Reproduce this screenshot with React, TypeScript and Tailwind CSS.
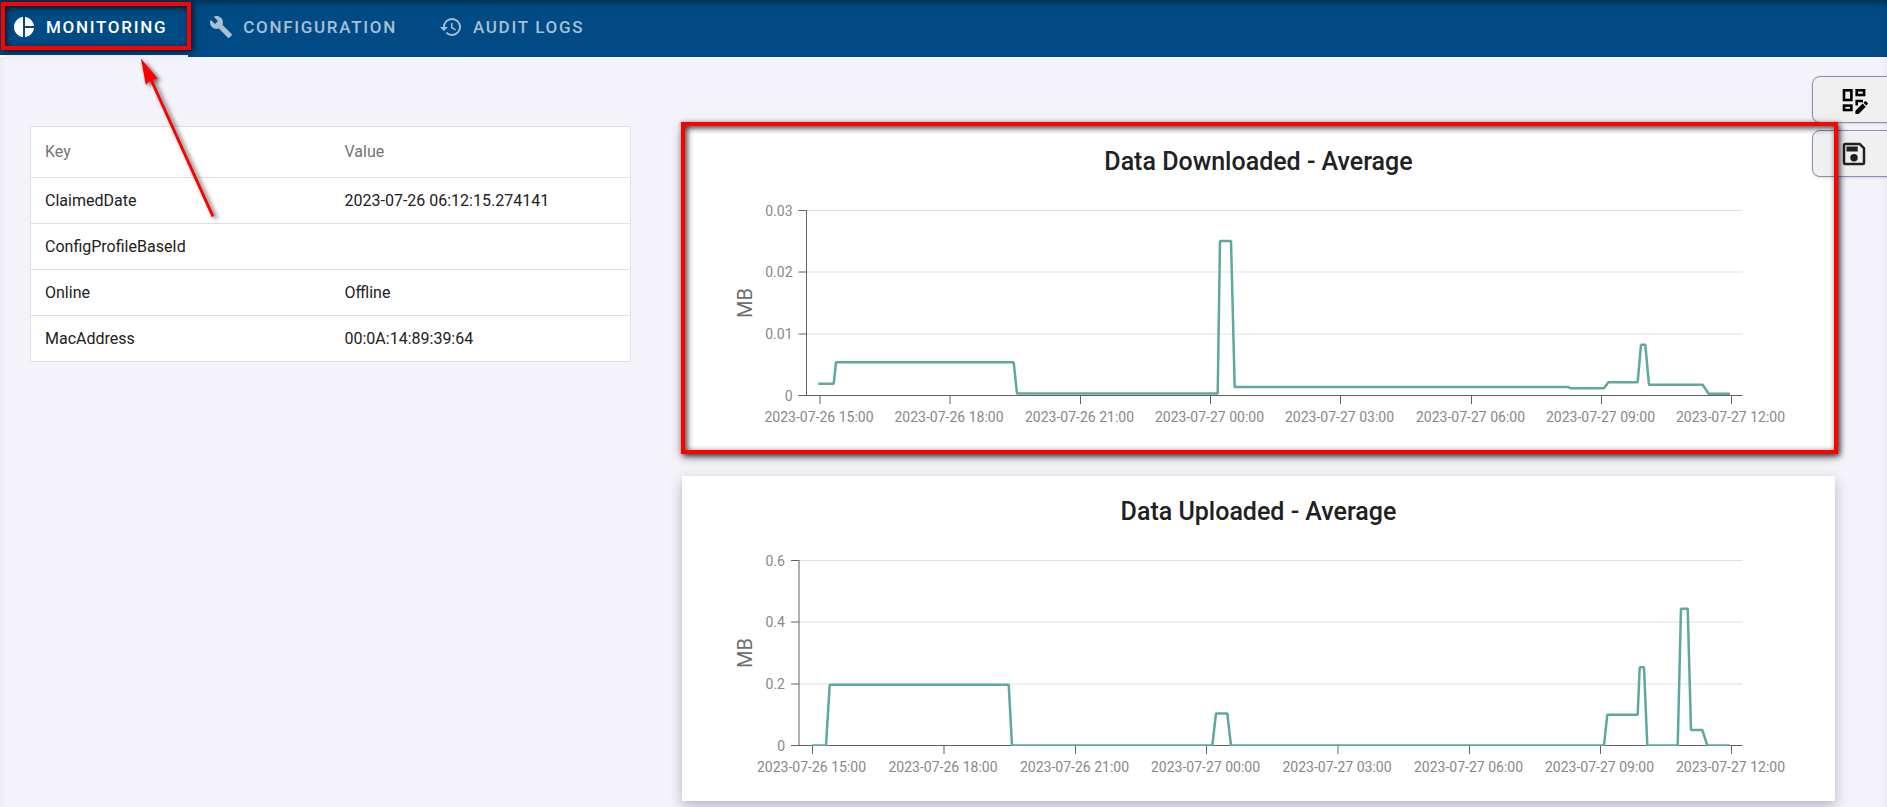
import { useId } from "react";
import { MdPieChart, MdBuild, MdHistory } from "react-icons/md";

type Point = [number, number];

interface ChartProps {
  title: string;
  axisX: number;
  yLabels: string[];
  ticks: number[];
  points: Point[];
}

const times = [
  "2023-07-26 15:00",
  "2023-07-26 18:00",
  "2023-07-26 21:00",
  "2023-07-27 00:00",
  "2023-07-27 03:00",
  "2023-07-27 06:00",
  "2023-07-27 09:00",
  "2023-07-27 12:00",
];

const gridY = [84.5, 146, 208, 269.5];

const downloaded: Point[] = [
  [136.3, 257.7], [151.7, 257.7], [154, 236.3], [331.7, 236.3], [335, 267.5],
  [535.7, 267.5], [538, 115], [549, 115], [552.7, 261], [886.3, 261],
  [888.3, 262.3], [922, 262.3], [926.3, 256.2], [955.7, 256.2], [959, 218.8],
  [963.3, 218.8], [967, 258.7], [1020.7, 258.7], [1026.7, 267.7], [1048, 267.7],
];

const uploaded: Point[] = [
  [130, 269.5], [144, 269.5], [147.7, 208.8], [326.7, 208.8], [330, 269.5],
  [530.3, 269.5], [534, 237.5], [545.3, 237.5], [549, 269.5], [922, 269.5],
  [925.3, 238.7], [955.7, 238.7], [957.7, 191.3], [962, 191.3], [965.3, 269.5],
  [995.7, 269.5], [999, 132.7], [1005.7, 132.7], [1009, 254], [1020.3, 254],
  [1025.3, 269.5], [1048, 269.5],
];

function Chart({ title, axisX, yLabels, ticks, points }: ChartProps) {
  const clip = useId();
  return (
    <section className="bg-white shadow-[0_5px_12px_rgba(40,40,80,0.3)]">
      <h2 className="pt-5 pb-3 text-center text-[25px] leading-8 font-medium text-[#212121]">
        {title}
      </h2>
      <svg viewBox="0 64 1153 261" className="block w-full" role="img" aria-label={title}>
        <clipPath id={clip}>
          <rect x="0" y="64" width="1153" height="206" />
        </clipPath>
        {gridY.slice(0, 3).map((y) => (
          <line key={y} x1={axisX} x2="1060.5" y1={y} y2={y} stroke="#e0e0e0" />
        ))}
        <g stroke="#626262">
          <line x1={axisX} x2={axisX} y1="84" y2="270" />
          <line x1={axisX - 8} x2="1060.5" y1="269.5" y2="269.5" />
          {gridY.map((y) => (
            <line key={y} x1={axisX - 8} x2={axisX} y1={y} y2={y} />
          ))}
          {ticks.map((x) => (
            <line key={x} x1={x} x2={x} y1="269" y2="278" />
          ))}
        </g>
        <polyline
          points={points.map((p) => p.join(",")).join(" ")}
          fill="none"
          stroke="#5fa8a0"
          strokeWidth="2.5"
          strokeLinejoin="bevel"
          clipPath={`url(#${clip})`}
        />
        <g fill="#888888" fontSize="14">
          {gridY.map((y, i) => (
            <text key={y} x={axisX - 14} y={y + 5} textAnchor="end">
              {yLabels[i]}
            </text>
          ))}
          {times.map((t, i) => (
            <text key={t} x={ticks[i] - 1} y="296" textAnchor="middle">
              {t}
            </text>
          ))}
        </g>
        <text
          transform="translate(70 177) rotate(-90)"
          textAnchor="middle"
          fontSize="20"
          fill="#6e6e6e"
        >
          MB
        </text>
      </svg>
    </section>
  );
}

const tabs = [
  { label: "MONITORING", Icon: MdPieChart, active: true },
  { label: "CONFIGURATION", Icon: MdBuild, active: false },
  { label: "AUDIT LOGS", Icon: MdHistory, active: false },
];

const rows = [
  ["ClaimedDate", "2023-07-26 06:12:15.274141"],
  ["ConfigProfileBaseId", ""],
  ["Online", "Offline"],
  ["MacAddress", "00:0A:14:89:39:64"],
];

function DashboardEditIcon() {
  return (
    <svg viewBox="0 0 28 28" className="size-7" aria-hidden="true">
      <g fill="none" stroke="#000" strokeWidth="2.6">
        <rect x="2" y="4.3" width="7.4" height="9.7" />
        <rect x="14.7" y="4.3" width="7.4" height="4.7" />
        <rect x="2" y="19.6" width="7.4" height="4.4" />
        <path d="M14.7 19.5V15H21" />
      </g>
      <path
        d="M13.4 28v-3.2l7.2-7.2 3.2 3.2-7.2 7.2zM21.5 16.7l1.4-1.4q.5-.5 1 0l1.8 1.8q.5.5 0 1l-1.4 1.4z"
        fill="#000"
      />
    </svg>
  );
}

function SaveIcon() {
  return (
    <svg viewBox="0 0 24 24" className="size-[30px]" fill="#212121" aria-hidden="true">
      <path d="M17 3H5a2 2 0 0 0-2 2v14a2 2 0 0 0 2 2h14a2 2 0 0 0 2-2V7l-4-4zm2 16H5V5h11.2L19 7.8V19zm-7-7a3 3 0 1 0 0 6 3 3 0 0 0 0-6zM6 6h9v4H6z" />
    </svg>
  );
}

export default function App() {
  return (
    <div className="relative min-h-screen overflow-hidden bg-[#f4f3f9] font-[Roboto,sans-serif] text-[#212121] shadow-[inset_0_0_8px_rgba(0,0,0,0.06)]">
      <header className="bg-[#004b85] shadow-[inset_0_6px_6px_-3px_rgba(0,0,0,0.4)]">
        <nav className="flex h-[57px]">
          {tabs.map(({ label, Icon, active }) => (
            <a
              key={label}
              href="#"
              className={
                active
                  ? "flex items-center gap-2.5 border-b-2 border-white pr-[21px] pl-3 text-[17px] font-medium tracking-widest text-white"
                  : "flex items-center gap-2.5 border-b-2 border-transparent px-[21px] text-[17px] font-medium tracking-widest text-[#a6c0d5]"
              }
            >
              <Icon className="mb-0.5 size-6" />
              {label}
            </a>
          ))}
        </nav>
      </header>

      <main className="flex items-start gap-[51px] pt-[69px] pr-[52px] pb-6 pl-[30px]">
        <div className="min-w-0 flex-[601]">
          <table className="w-full table-fixed border-collapse border border-[#e0e0e0] bg-white text-left text-base">
            <thead>
              <tr className="h-[51px] border-b border-[#e0e0e0] text-[#757575]">
                <th className="px-3.5 font-normal">Key</th>
                <th className="px-3.5 font-normal">Value</th>
              </tr>
            </thead>
            <tbody>
              {rows.map(([key, value]) => (
                <tr key={key} className="h-[46px] border-b border-[#e0e0e0]">
                  <td className="px-3.5">{key}</td>
                  <td className="px-3.5">{value}</td>
                </tr>
              ))}
            </tbody>
          </table>
        </div>

        <div className="relative flex min-w-0 flex-[1153] flex-col gap-[25px]">
          <Chart
            title="Data Downloaded - Average"
            axisX={124.5}
            yLabels={["0.03", "0.02", "0.01", "0"]}
            ticks={[138, 268, 398.5, 528.5, 658.5, 789.5, 919.5, 1049.5]}
            points={downloaded}
          />
          <Chart
            title="Data Uploaded - Average"
            axisX={117}
            yLabels={["0.6", "0.4", "0.2", "0"]}
            ticks={[130.5, 262, 393.5, 524.5, 656, 787.5, 918.5, 1049.5]}
            points={uploaded}
          />
          <div className="pointer-events-none absolute -top-1 -right-[3px] -left-px z-20 h-[332px] border-4 border-[#ff0000] shadow-[2px_2px_6px_rgba(0,0,0,0.8),inset_2px_2px_6px_rgba(0,0,0,0.8)]" />
        </div>
      </main>

      <aside className="absolute top-[76px] -right-2 z-10 flex flex-col gap-[7px]">
        <button
          type="button"
          aria-label="Edit dashboard"
          className="flex h-[47px] w-[83px] items-center rounded-lg border border-[#8a8dbb] bg-[#f0f0f0] pl-[29px] shadow-sm"
        >
          <DashboardEditIcon />
        </button>
        <button
          type="button"
          aria-label="Save"
          className="flex h-[47px] w-[83px] items-center rounded-lg border border-[#8a8dbb] bg-[#f0f0f0] pl-[26px] shadow-sm"
        >
          <SaveIcon />
        </button>
      </aside>

      <div className="pointer-events-none absolute top-0.5 left-px z-20 h-12 w-[190px] border-4 border-[#ff0000] shadow-[2px_2px_6px_rgba(0,0,0,0.7),inset_2px_2px_6px_rgba(0,0,0,0.7)]" />
      <svg
        viewBox="0 0 100 180"
        className="pointer-events-none absolute top-[50px] left-[130px] z-20 h-[180px] w-[100px] drop-shadow-[3px_2px_2px_rgba(0,0,0,0.6)]"
        aria-hidden="true"
      >
        <path d="M21 29.5 83 166.5" stroke="#f00" strokeWidth="3" />
        <path d="M10.8 8.3 27.7 28.7 21 30 15.8 35z" fill="#f00" />
      </svg>
    </div>
  );
}
